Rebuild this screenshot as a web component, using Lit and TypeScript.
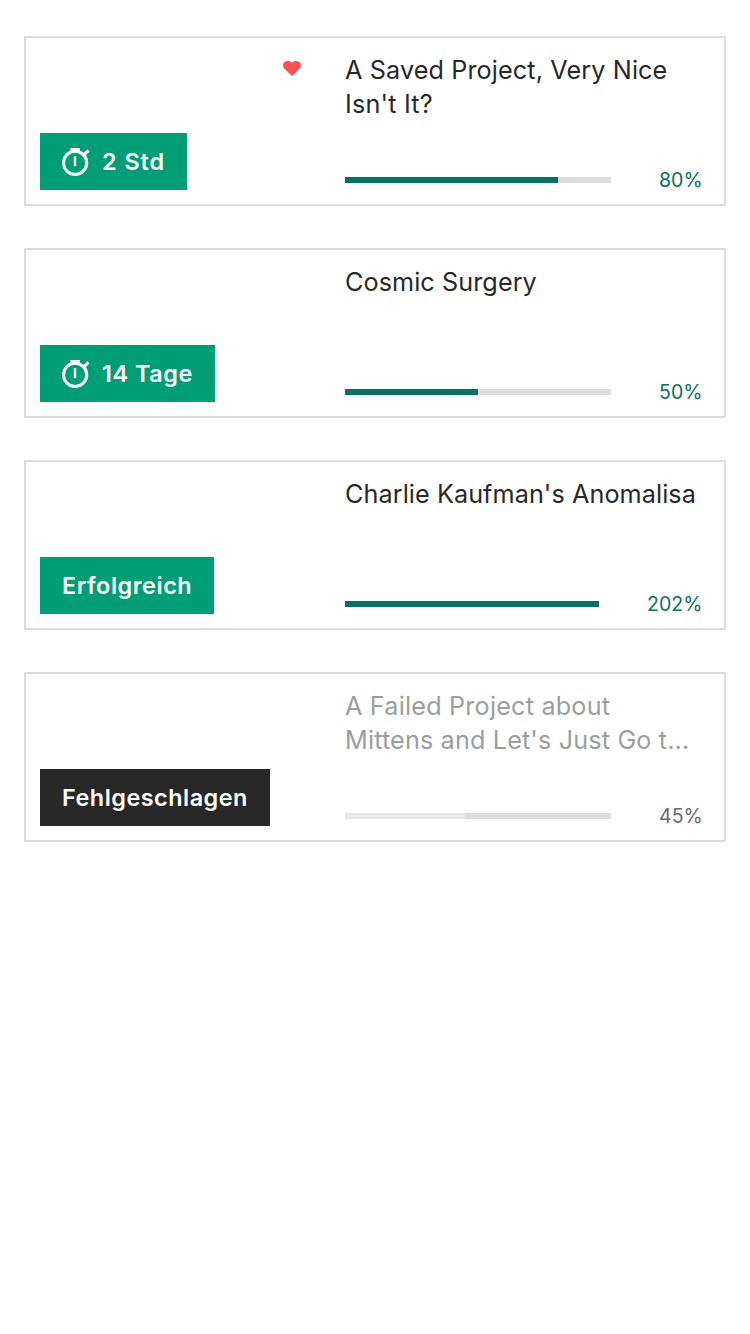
import { LitElement, html, css, svg, nothing } from "lit";
import { customElement, property } from "lit/decorators.js";

interface Line {
  text: string;
  tracking: number;
}

interface Project {
  lines: Line[];
  status: string;
  statusTracking: number;
  state: "live" | "success" | "failed";
  percent: number;
  saved?: boolean;
}

const projects: Project[] = [
  {
    lines: [{ text: "A Saved Project, Very Nice", tracking: 0.12 }, { text: "Isn't It?", tracking: 0.18 }],
    status: "2 Std", statusTracking: 0.96, state: "live", percent: 80, saved: true,
  },
  { lines: [{ text: "Cosmic Surgery", tracking: 0.08 }], status: "14 Tage", statusTracking: 0.56, state: "live", percent: 50 },
  { lines: [{ text: "Charlie Kaufman's Anomalisa", tracking: 0.08 }], status: "Erfolgreich", statusTracking: 0.56, state: "success", percent: 202 },
  {
    lines: [{ text: "A Failed Project about", tracking: 0.2 }, { text: "Mittens and Let's Just Go t...", tracking: 0.15 }],
    status: "Fehlgeschlagen", statusTracking: 0.5, state: "failed", percent: 45,
  },
];

@customElement("project-card")
export class ProjectCard extends LitElement {
  @property({ attribute: false }) project!: Project;

  static styles = css`
    :host { display: block; }
    .card {
      box-sizing: border-box;
      height: 170px;
      border: 2px solid #dcdcdc;
      display: grid;
      grid-template-columns: 305px 1fr;
      padding: 0 22px 14px 14px;
      background: #fff;
    }
    .media { display: flex; flex-direction: column; justify-content: space-between; align-items: flex-start; }
    .saved { height: 16px; margin: 23px 0 0 243px; }
    .saved svg { display: block; }
    .badge {
      box-sizing: border-box;
      height: 57px;
      margin-top: auto;
      padding: 0 22px;
      display: flex;
      align-items: center;
      background: #009e74;
      color: #fff;
      font-size: 23.4px;
      font-weight: 600;
      white-space: nowrap;
    }
    .failed .badge { background: #282828; }
    .badge svg { margin-right: 12px; }
    .info { display: flex; flex-direction: column; justify-content: space-between; }
    .title { padding-top: 15px; font-size: 25.2px; line-height: 34px; color: #282828; white-space: nowrap; }
    .failed .title { color: #9b9e9e; }
    .line { display: block; width: max-content; }
    .funding { display: flex; align-items: center; height: 20px; gap: 48px; }
    .track { flex: 1; height: 6px; background: #dddddd; }
    .fill { height: 6px; background: #037362; }
    .failed .fill { background: #e8e8e8; }
    .percent { width: 43px; font-size: 19.5px; line-height: 20px; letter-spacing: 0.05px; color: #037362; white-space: nowrap; }
    .success .percent { width: 55px; }
    .failed .percent { color: #656969; }
  `;

  private clock() {
    return svg`<svg width="28" height="29" viewBox="0 0 28 29" fill="none" stroke="#fff" stroke-width="3.1">
      <circle cx="13.1" cy="15.9" r="11.6"/><path d="M8.4 2.6h9.4M21.6 8.2l5-4.8"/><path stroke-width="2.4" d="M13 9.2v10"/></svg>`;
  }

  render() {
    const p = this.project;
    return html`<article class="card ${p.state}">
      <div class="media">
        ${p.saved
          ? html`<div class="saved"><svg width="18" height="15" viewBox="0 0 18 15"><path fill="#ff5150" d="M9 15 1.5 7.8C-.5 5.7-.4 2.8 1.5 1.1 3.5-.5 6.9-.4 9 1.9 11.1-.4 14.5-.5 16.5 1.1 18.4 2.8 18.5 5.7 16.5 7.8Z"/></svg></div>`
          : nothing}
        <div class="badge">
          ${p.state === "live" ? this.clock() : nothing}<span class="label" style="letter-spacing:${p.statusTracking}px">${p.status}</span>
        </div>
      </div>
      <div class="info">
        <div class="title">${p.lines.map((l) => html`<span class="line" style="letter-spacing:${l.tracking}px">${l.text}</span>`)}</div>
        <div class="funding">
          <div class="track"><div class="fill" style="width:${Math.min(p.percent, 100)}%"></div></div>
          <span class="percent">${p.percent}%</span>
        </div>
      </div>
    </article>`;
  }
}

@customElement("app-root")
export class AppRoot extends LitElement {
  static styles = css`
    :host {
      box-sizing: border-box;
      display: flex;
      flex-direction: column;
      gap: 42px;
      min-height: 1334px;
      padding: 36px 24px;
      background: #fff;
      font-family: Inter, sans-serif;
    }
  `;

  render() {
    return projects.map((p) => html`<project-card .project=${p}></project-card>`);
  }
}
